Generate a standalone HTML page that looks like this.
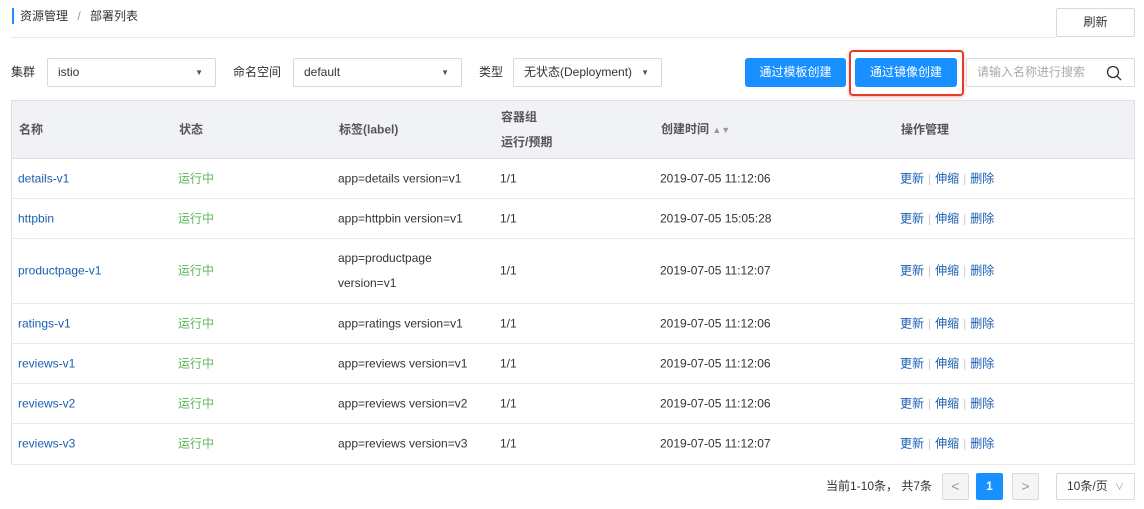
<!DOCTYPE html><html><head><meta charset="utf-8"><style>
*{box-sizing:border-box;margin:0;padding:0}
body{width:1144px;height:509px;background:#fff;font-family:"Liberation Sans","Noto Sans CJK SC",sans-serif;font-size:12px;color:#333;position:relative;overflow:hidden}
.a{position:absolute}
.sel{position:absolute;top:58px;height:29px;border:1px solid #d9d9d9;border-radius:2px;padding-left:10px;line-height:27px;font-size:12px;color:#333}
.sel i{position:absolute;right:12px;top:0;font-style:normal;font-size:8px;color:#555}
.btn{position:absolute;top:58px;height:29px;background:#1890ff;color:#fff;border-radius:3px;text-align:center;line-height:29px;font-size:12px}
.row{position:absolute;left:11px;width:1124px;border-bottom:1px solid #e8e8e8}
.c{position:absolute;top:50%;transform:translateY(-50%);line-height:25px}
.lk{color:#1a5fb4}
.g{color:#5cb85c}
.op{color:#1a5fb4}.op b{font-weight:normal;color:#ccc;margin:0 4px}
.pg{position:absolute;top:473px;height:27px;width:27px;border:1px solid #d9d9d9;background:#f5f5f5;border-radius:2px;text-align:center;line-height:25px;color:#999;font-size:14px}
.hd .c{color:#555;font-weight:bold}
</style></head><body>
<div class="a" style="left:12px;top:8px;width:2px;height:16px;background:#1890ff"></div>
<div class="a" style="left:20px;top:8px;line-height:16px;font-size:12px">资源管理 <span style="color:#999;margin:0 6px">/</span> 部署列表</div>
<div class="a" style="left:11px;top:37px;width:1045px;height:1px;background:#e8e8e8"></div>
<div class="a" style="left:1056px;top:8px;width:79px;height:29px;border:1px solid #d9d9d9;border-radius:2px;text-align:center;line-height:27px">刷新</div>

<div class="a" style="left:11px;top:58px;line-height:29px">集群</div>
<div class="sel" style="left:47px;width:169px">istio<i>▼</i></div>
<div class="a" style="left:233px;top:58px;line-height:29px">命名空间</div>
<div class="sel" style="left:293px;width:169px">default<i>▼</i></div>
<div class="a" style="left:479px;top:58px;line-height:29px">类型</div>
<div class="sel" style="left:513px;width:149px">无状态(Deployment)<i>▼</i></div>
<div class="btn" style="left:745px;width:101px">通过模板创建</div>
<div class="a" style="left:849px;top:50px;width:115px;height:46px;border:2px solid #e8392a;border-radius:4px;box-shadow:0 1px 3px rgba(200,0,0,.3)"></div>
<div class="btn" style="left:855px;width:102px">通过镜像创建</div>
<div class="a" style="left:966px;top:58px;width:169px;height:29px;border:1px solid #d9d9d9;border-radius:2px;padding-left:10px;line-height:27px;color:#aaa">请输入名称进行搜索
<svg class="a" style="right:12px;top:6px" width="16" height="16" viewBox="0 0 16 16"><circle cx="7" cy="7" r="5.5" fill="none" stroke="#333" stroke-width="1.3"/><path d="M11 11L15 15" stroke="#333" stroke-width="1.3"/></svg></div>

<div class="a" style="left:11px;top:100px;width:1124px;height:365px;border:1px solid #e0e0e0"></div>
<div class="row hd" style="top:100px;height:59px;background:#f0f2f5;border:1px solid #e0e0e0">
<div class="c" style="left:7px">名称</div><div class="c" style="left:167px">状态</div><div class="c" style="left:327px">标签(label)</div>
<div class="c" style="left:489px">容器组<br>运行/预期</div>
<div class="c" style="left:649px">创建时间 <span style="color:#999;font-size:9px">▲▼</span></div><div class="c" style="left:889px">操作管理</div></div>

<div class="row" style="top:159px;height:40px"><div class="c lk" style="left:7px">details-v1</div><div class="c g" style="left:167px">运行中</div><div class="c" style="left:327px">app=details version=v1</div><div class="c" style="left:489px">1/1</div><div class="c" style="left:649px">2019-07-05 11:12:06</div><div class="c op" style="left:889px">更新<b>|</b>伸缩<b>|</b>删除</div></div>
<div class="row" style="top:199px;height:40px"><div class="c lk" style="left:7px">httpbin</div><div class="c g" style="left:167px">运行中</div><div class="c" style="left:327px">app=httpbin version=v1</div><div class="c" style="left:489px">1/1</div><div class="c" style="left:649px">2019-07-05 15:05:28</div><div class="c op" style="left:889px">更新<b>|</b>伸缩<b>|</b>删除</div></div>
<div class="row" style="top:239px;height:65px"><div class="c lk" style="left:7px">productpage-v1</div><div class="c g" style="left:167px">运行中</div><div class="c" style="left:327px">app=productpage<br>version=v1</div><div class="c" style="left:489px">1/1</div><div class="c" style="left:649px">2019-07-05 11:12:07</div><div class="c op" style="left:889px">更新<b>|</b>伸缩<b>|</b>删除</div></div>
<div class="row" style="top:304px;height:40px"><div class="c lk" style="left:7px">ratings-v1</div><div class="c g" style="left:167px">运行中</div><div class="c" style="left:327px">app=ratings version=v1</div><div class="c" style="left:489px">1/1</div><div class="c" style="left:649px">2019-07-05 11:12:06</div><div class="c op" style="left:889px">更新<b>|</b>伸缩<b>|</b>删除</div></div>
<div class="row" style="top:344px;height:40px"><div class="c lk" style="left:7px">reviews-v1</div><div class="c g" style="left:167px">运行中</div><div class="c" style="left:327px">app=reviews version=v1</div><div class="c" style="left:489px">1/1</div><div class="c" style="left:649px">2019-07-05 11:12:06</div><div class="c op" style="left:889px">更新<b>|</b>伸缩<b>|</b>删除</div></div>
<div class="row" style="top:384px;height:40px"><div class="c lk" style="left:7px">reviews-v2</div><div class="c g" style="left:167px">运行中</div><div class="c" style="left:327px">app=reviews version=v2</div><div class="c" style="left:489px">1/1</div><div class="c" style="left:649px">2019-07-05 11:12:06</div><div class="c op" style="left:889px">更新<b>|</b>伸缩<b>|</b>删除</div></div>
<div class="row" style="top:424px;height:41px"><div class="c lk" style="left:7px">reviews-v3</div><div class="c g" style="left:167px">运行中</div><div class="c" style="left:327px">app=reviews version=v3</div><div class="c" style="left:489px">1/1</div><div class="c" style="left:649px">2019-07-05 11:12:07</div><div class="c op" style="left:889px">更新<b>|</b>伸缩<b>|</b>删除</div></div>

<div class="a" style="left:826px;top:473px;line-height:27px">当前1-10条， 共7条</div>
<div class="pg" style="left:942px">&lt;</div>
<div class="pg" style="left:976px;background:#1890ff;border-color:#1890ff;color:#fff;font-size:12px;font-weight:bold">1</div>
<div class="pg" style="left:1012px">&gt;</div>
<div class="a" style="left:1056px;top:473px;width:79px;height:27px;border:1px solid #d9d9d9;border-radius:2px;padding-left:10px;line-height:25px">10条/页 <span style="color:#999;font-size:9px;margin-left:4px">∨</span></div>
</body></html>
